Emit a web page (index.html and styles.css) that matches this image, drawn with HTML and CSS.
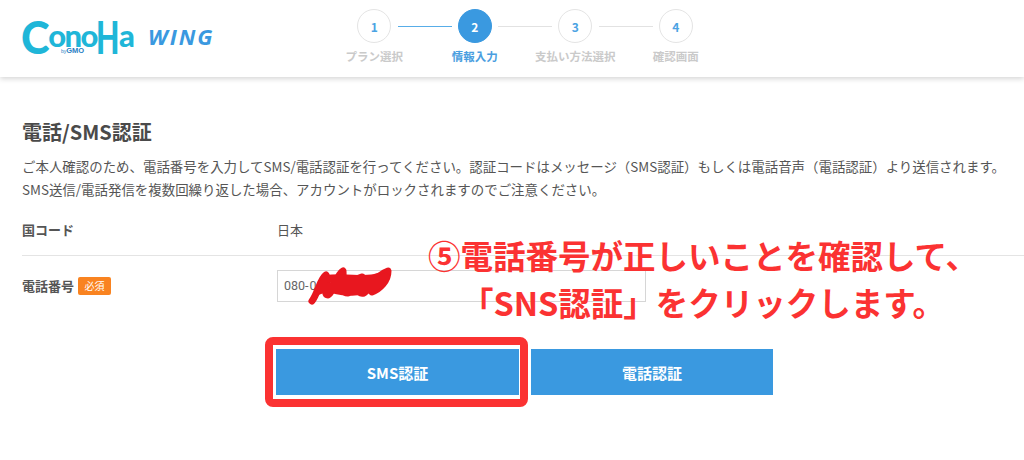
FILE: index.html
```html
<!DOCTYPE html>
<html lang="ja">
<head>
    <meta charset="UTF-8">
    <meta name="viewport" content="width=device-width, initial-scale=1.0">
    <title>電話/SMS認証</title>
    <link rel="stylesheet" href="styles.css">
</head>
<body>
    <header class="header">
        <div class="logo">
            <div class="logo-mark">
                <span class="logo-c">C</span>
                <div class="logo-mid">
                    <span class="logo-ono">ono</span>
                    <span class="logo-gmo"><small>by</small>GMO</span>
                </div>
                <span class="logo-h">H</span>
                <span class="logo-a">a</span>
            </div>
            <span class="logo-wing">WING</span>
        </div>
        <ol class="steps">
            <li class="step done">
                <span class="step-num">1</span>
                <span class="step-label">プラン選択</span>
            </li>
            <li class="step current">
                <span class="step-num">2</span>
                <span class="step-label">情報入力</span>
            </li>
            <li class="step">
                <span class="step-num">3</span>
                <span class="step-label">支払い方法選択</span>
            </li>
            <li class="step">
                <span class="step-num">4</span>
                <span class="step-label">確認画面</span>
            </li>
        </ol>
    </header>

    <main class="content">
        <h1 class="title">電話/SMS認証</h1>
        <p class="lead">ご本人確認のため、電話番号を入力してSMS/電話認証を行ってください。認証コードはメッセージ（SMS認証）もしくは電話音声（電話認証）より送信されます。<br>SMS送信/電話発信を複数回繰り返した場合、アカウントがロックされますのでご注意ください。</p>

        <div class="row row-country">
            <div class="row-label">国コード</div>
            <div class="row-value">日本</div>
        </div>
        <div class="row row-phone">
            <div class="row-label">電話番号<span class="required">必須</span></div>
            <div class="row-value">
                <div class="phone-input">080-<span class="phone-rest">0000-0000</span></div>
            </div>
        </div>

        <div class="buttons">
            <div class="highlight">
                <button class="btn">SMS認証</button>
            </div>
            <button class="btn">電話認証</button>
        </div>
    </main>

    <svg class="scribble" width="90" height="42" viewBox="0 0 90 42">
        <path d="M6 36 C12 28 14 14 20 10 C24 16 16 30 22 30 C30 24 30 10 37 6 C38 18 34 28 42 28 C48 22 46 14 56 12 C52 20 50 30 58 28 C66 22 70 10 82 6 C82 16 74 24 66 27" fill="none" stroke="#e8171f" stroke-width="7" stroke-linecap="round" stroke-linejoin="round"/>
        <path d="M12 26 C30 17 54 22 80 12 M16 19 C34 30 58 29 76 18 M20 14 C40 11 60 17 72 12" fill="none" stroke="#e8171f" stroke-width="8" stroke-linecap="round"/>
    </svg>

    <div class="note">⑤電話番号が正しいことを確認して、<br>「SNS認証」をクリックします。</div>
</body>
</html>
```

FILE: styles.css
```css
* {
    box-sizing: border-box;
}
body {
    margin: 0;
    height: 460px;
    overflow: hidden;
    position: relative;
    font-family: "Noto Sans CJK JP", "Noto Sans", sans-serif;
    color: #555;
    background-color: white;
}
.header {
    display: flex;
    height: 77px;
    padding: 9px 0 0 22px;
    box-shadow: 0 2px 5px rgba(0, 0, 0, 0.16);
}
.logo {
    display: flex;
    align-items: flex-start;
    width: 302px;
    padding-top: 11px;
}
.logo-mark {
    display: flex;
    align-items: flex-start;
    width: 114px;
    height: 33px;
    margin-left: -1px;
    font-family: "Lato", sans-serif;
    font-weight: 900;
    color: #1fb6d8;
}
.logo-c {
    width: 28px;
    font-size: 46px;
    line-height: 33px;
    transform: scaleX(0.94);
    transform-origin: left;
}
.logo-mid {
    display: flex;
    flex-direction: column;
    align-items: center;
    width: 47px;
}
.logo-ono {
    margin-top: 5px;
    font-size: 31px;
    line-height: 20px;
    letter-spacing: -1.6px;
}
.logo-gmo {
    margin-top: 3px;
    font-family: "Liberation Sans", sans-serif;
    font-size: 7.5px;
    font-weight: bold;
    line-height: 6px;
    color: #2a7fc4;
}
.logo-gmo small {
    font-size: 5px;
    font-weight: normal;
}
.logo-h {
    width: 23px;
    font-size: 46px;
    line-height: 33px;
    transform: scaleX(0.66);
    transform-origin: left;
}
.logo-a {
    margin-top: 5px;
    font-size: 31px;
    line-height: 20px;
}
.logo-wing {
    margin: 3px 0 0 13px;
    font-family: "Open Sans", sans-serif;
    font-size: 22px;
    font-weight: bold;
    font-style: italic;
    line-height: 26px;
    letter-spacing: 2px;
    color: #3a99e0;
}
.steps {
    display: flex;
    margin: 0;
    padding: 0;
    list-style: none;
}
.step {
    position: relative;
    display: flex;
    flex-direction: column;
    align-items: center;
    width: 100.5px;
}
.step + .step::before {
    content: "";
    position: absolute;
    top: 16.5px;
    left: -27px;
    width: 54px;
    height: 1px;
    background-color: #e2e2e2;
}
.step.current::before {
    background-color: #58ade8;
}
.step-num {
    display: flex;
    align-items: center;
    justify-content: center;
    width: 34px;
    height: 34px;
    border: 1px solid #e4e4e4;
    border-radius: 50%;
    font-size: 12px;
    font-weight: bold;
    color: #4ba3e3;
}
.step-label {
    margin-top: 5px;
    font-size: 11.5px;
    font-weight: bold;
    line-height: 17px;
    white-space: nowrap;
    color: #cacaca;
}
.current .step-num {
    background-color: #3a99e0;
    border-color: #3a99e0;
    color: white;
}
.current .step-label {
    color: #4a9ee0;
}
.content {
    padding: 40px 0 0 22px;
}
.title {
    margin: 0;
    font-size: 20px;
    font-weight: bold;
    line-height: 29px;
    color: #4a4a4a;
}
.lead {
    margin: 9px 0 0;
    font-size: 13.45px;
    line-height: 22.5px;
    white-space: nowrap;
    color: #555;
}
.row {
    display: flex;
    align-items: center;
}
.row-country {
    height: 56px;
    padding-top: 3px;
    border-bottom: 1px solid #e4e4e4;
}
.row-phone {
    height: 60px;
}
.row-phone .row-label {
    padding-bottom: 1px;
}
.row-label {
    display: flex;
    align-items: center;
    width: 255px;
    font-size: 13px;
    font-weight: bold;
    color: #555;
}
.row-value {
    font-size: 13px;
    color: #555;
}
.required {
    margin-left: 4px;
    padding: 0 6.5px;
    font-size: 10px;
    font-weight: normal;
    line-height: 18px;
    color: white;
    background-color: #f98320;
    border-radius: 2px;
}
.phone-input {
    width: 369px;
    height: 32px;
    padding-left: 6px;
    font-family: "Roboto", "Noto Sans", sans-serif;
    font-size: 12.5px;
    line-height: 30px;
    color: #666;
    border: 1px solid #d6d6d6;
}
.phone-rest {
    margin-left: 1px;
}
.buttons {
    display: flex;
    align-items: center;
    margin: 21px 0 0 243px;
}
.highlight {
    padding: 4px 1px 4px 3px;
    border: 8px solid #fb3232;
    border-radius: 8px;
}
.btn {
    display: block;
    width: 243px;
    height: 46px;
    padding: 0;
    font-family: inherit;
    font-size: 15px;
    font-weight: bold;
    color: white;
    background-color: #3a99e0;
    border: none;
}
.highlight + .btn {
    margin-left: 3px;
    width: 242px;
}
.scribble {
    position: absolute;
    left: 306px;
    top: 265px;
}
.note {
    position: absolute;
    left: 393px;
    top: 231px;
    width: 620px;
    font-size: 32.5px;
    font-weight: bold;
    line-height: 47px;
    text-align: center;
    white-space: nowrap;
    color: #fb3232;
}
```
